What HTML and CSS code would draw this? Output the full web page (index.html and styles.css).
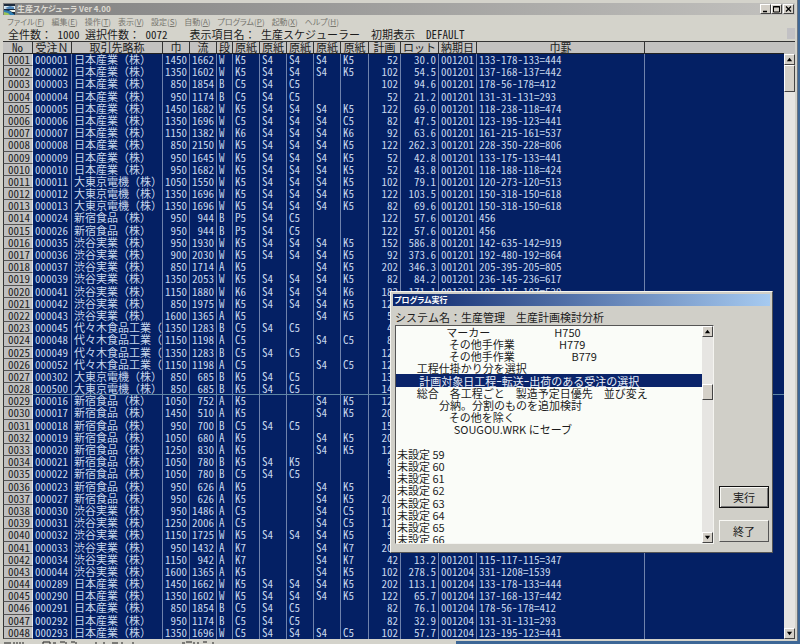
FILE: index.html
```
<!DOCTYPE html>
<html lang="ja">
<head>
<meta charset="utf-8">
<title>生産スケジューラ Ver 4.00</title>
<link rel="stylesheet" href="styles.css">
</head>
<body>
<main class="window">
  <header class="titlebar">
    <svg class="app-icon" viewBox="0 0 11 11" aria-hidden="true">
      <rect width="11" height="11" fill="#1c2a3c"/>
      <path d="M0 2h11v3H0z" fill="#d8e8f0"/>
      <path d="M1 4l5-2 4 1v2H4z" fill="#4f86b8"/>
      <path d="M0 6l6 1 5 4H0z" fill="#2f7fb4"/>
      <path d="M0 8l4 1 2 2H0z" fill="#9cc458"/>
      <path d="M5 6h6v2H8z" fill="#f0f4e8"/>
    </svg>
    <h1>生産スケジューラ Ver 4.00</h1>
    <div class="window-buttons">
      <button type="button" aria-label="最小化"><svg viewBox="0 0 9 8"><path d="M2 6.500h4" stroke="#000" stroke-width="1.500"/></svg></button>
      <button type="button" aria-label="最大化"><svg viewBox="0 0 9 8"><path d="M1.500 1.500h6v5.500h-6zM1 2h7" fill="none" stroke="#000"/></svg></button>
      <button type="button" class="close" aria-label="閉じる"><svg viewBox="0 0 9 8"><path d="M2 1.500l5 5M7 1.500l-5 5" stroke="#000" stroke-width="1.300"/></svg></button>
    </div>
  </header>
  <nav class="menu">
    <button type="button">ファイル(<u>F</u>)</button>
    <button type="button">編集(<u>E</u>)</button>
    <button type="button">操作(<u>T</u>)</button>
    <button type="button">表示(<u>V</u>)</button>
    <button type="button">設定(<u>S</u>)</button>
    <button type="button">自動(<u>A</u>)</button>
    <button type="button">プログラム(<u>P</u>)</button>
    <button type="button">起動(<u>X</u>)</button>
    <button type="button">ヘルプ(<u>H</u>)</button>
  </nav>
  <div class="status">
    <p>全件数： 1000 選択件数： 0072    表示項目名： 生産スケジューラー　初期表示  DEFAULT</p>
    <span class="grip"></span>
  </div>
  <div class="content">
    <div class="grid-area">
      <table class="grid">
        <colgroup>
          <col class="c30"><col class="c39"><col class="c91"><col class="c27"><col class="c27"><col class="c16">
          <col class="c27"><col class="c27"><col class="c27"><col class="c27"><col class="c28">
          <col class="c32"><col class="c38"><col class="c38"><col class="c168"><col>
        </colgroup>
        <thead>
          <tr>
            <th>No</th><th>受注Ｎ</th><th>取引先略称</th><th>巾</th><th>流</th><th>段</th>
            <th>原紙</th><th>原紙</th><th>原紙</th><th>原紙</th><th>原紙</th>
            <th>計画</th><th>ロット</th><th>納期日</th><th>巾罫</th><th class="rest"></th>
          </tr>
        </thead>
        <tbody id="rows"></tbody>
      </table>
    </div>
    <div class="scrollbar">
      <button type="button" aria-label="上へ"><svg viewBox="0 0 8 8"><path d="M1 6l3-4 3 4z"/></svg></button>
      <div class="thumb"></div>
      <button type="button" class="down" aria-label="下へ"><svg viewBox="0 0 8 8"><path d="M1 2l3 4 3-4z"/></svg></button>
    </div>
  </div>
</main>

<footer class="behind">
  <div class="behind-window">
    <svg viewBox="0 0 220 3" width="220" height="3" aria-hidden="true">
      <path d="M4 2h7M14 1v2M17 1v2M20 1v2M23 1v2M43 1h7M43 1v2M50 1v2M53 2h3M60 1h5M66 1v2M71 1h4M76 1v2M96 1v2M104 1v2M112 2h6M122 1v2M133 1v2M182 2h3M186 1h6M194 1v2M198 1v2M203 1h4M213 1v2" stroke="#222" fill="none"/>
    </svg>
  </div>
</footer>

<section class="dialog" role="dialog" aria-labelledby="dialog-title">
  <h2 id="dialog-title">プログラム実行</h2>
  <div class="dialog-body">
    <label for="programs">システム名：生産管理　生産計画検討分析</label>
    <div class="list-frame">
      <select id="programs" size="18"></select>
      <div class="scrollbar">
        <button type="button" aria-label="上へ"><svg viewBox="0 0 8 8"><path d="M1 6l3-4 3 4z"/></svg></button>
        <div class="thumb"></div>
        <button type="button" class="down" aria-label="下へ"><svg viewBox="0 0 8 8"><path d="M1 2l3 4 3-4z"/></svg></button>
      </div>
    </div>
    <div class="actions">
      <button type="button" class="default">実行</button>
      <button type="button">終了</button>
    </div>
  </div>
</section>
<script src="script.js"></script>
</body>
</html>
```
FILE: styles.css
```
* { box-sizing: border-box; }

body {
  margin: 0;
  min-height: 100vh;
  height: 100vh;
  display: flex;
  flex-direction: column;
  background: #3d6796;
  color: #1c1c1c;
  font: 11px/12px "Noto Sans Mono CJK JP", "Noto Sans CJK JP", monospace;
}

h1, h2, p { margin: 0; }

button {
  margin: 0;
  padding: 0;
  font: inherit;
  color: inherit;
}

.window {
  flex: 1;
  min-height: 0;
  display: flex;
  flex-direction: column;
  margin-right: 2px;
  padding: 3px 2px 2px 3px;
  background: #d4d3cb;
  border-right: 1px solid #6b7480;
}

.titlebar {
  height: 12px;
  display: flex;
  align-items: center;
  padding-right: 1px;
  background: linear-gradient(to right, #808080, #c2c1be);
  margin-bottom: 1px;
}

.app-icon { width: 11px; height: 11px; margin: 0 2px 0 1px; }

.titlebar h1 {
  flex: 1;
  font: bold 8px/12px "Noto Sans CJK JP", sans-serif;
  font-feature-settings: "palt";
  color: #dcdad2;
}

.window-buttons { display: flex; }

.window-buttons button,
.scrollbar button,
.thumb {
  background: #d4d0c8;
  border: 1px solid;
  border-color: #fff #444 #444 #fff;
}

.window-buttons button { width: 11px; height: 10px; display: flex; }
.window-buttons .close { margin-left: 1px; }
.window-buttons svg { width: 9px; height: 8px; }

.menu {
  height: 12px;
  display: flex;
  gap: 7px;
  padding-left: 4px;
}

.menu button {
  border: 0;
  background: none;
  font: 8px/12px "Noto Sans CJK JP", sans-serif;
  font-feature-settings: "palt";
  color: #77766f;
}

.status {
  height: 13px;
  display: flex;
  justify-content: space-between;
  padding-left: 5px;
  white-space: pre;
}

.status p { line-height: 13px; }
.grip { width: 8px; height: 11px; background: #c2c1c4; }

.content {
  flex: 1;
  min-height: 0;
  display: flex;
  background: #c3c2c0;
  border-top: 1px solid #333;
}

.grid-area { flex: 1; min-width: 0; }

.grid {
  width: 100%;
  height: 100%;
  table-layout: fixed;
  border-collapse: separate;
  border-spacing: 0;
  background: #042064;
  color: #c6d6ec;
}

.c16 { width: 16px; }
.c27 { width: 27px; }
.c28 { width: 28px; }
.c30 { width: 30px; }
.c32 { width: 32px; }
.c38 { width: 38px; }
.c39 { width: 39px; }
.c91 { width: 91px; }
.c168 { width: 168px; }

.grid th, .grid td {
  padding: 0 2px;
  line-height: 11px;
  vertical-align: top;
  white-space: nowrap;
  text-align: left;
  border-right: 1px solid #6f82ac;
}

.grid thead th {
  height: 12px;
  padding: 0;
  font-weight: normal;
  text-align: center;
  color: #1c1c1c;
  background: #c3c2c0;
  border-right-color: #333;
  border-bottom: 1px solid #222;
}

.grid thead .rest, .grid td:last-child { border-right: 0; }

.grid tbody th {
  font-weight: normal;
  text-align: right;
  color: #222;
  background: #c0c0c0;
  border-left: 1px solid #333;
  border-bottom: 1px solid #555;
  border-right-color: #e8e8e8;
}

.grid .num { text-align: right; }
.grid .section-end td { border-bottom: 1px solid #5f86a4; }

.scrollbar {
  width: 11px;
  display: flex;
  flex-direction: column;
  background: #e6e5e2;
}

.content .scrollbar { margin-top: 12px; }
.scrollbar button { height: 11px; display: flex; justify-content: center; align-items: center; }
.scrollbar svg { width: 7px; height: 7px; }
.scrollbar .thumb { height: 27px; }
.scrollbar .down { margin-top: auto; }

.behind { height: 3px; }
.behind-window { width: 57%; height: 3px; background: #d4d3cb; overflow: hidden; }
.behind-window svg { display: block; }

.dialog {
  position: absolute;
  left: 390px;
  top: 291px;
  width: 383px;
  padding: 2px;
  background: #d0cfc8;
  border: 1px solid;
  border-color: #f4f4f0 #555 #555 #f4f4f0;
}

.dialog h2 {
  padding-left: 1px;
  font: bold 8px/12px "Noto Sans CJK JP", sans-serif;
  font-feature-settings: "palt";
  color: #fff;
  background: linear-gradient(to right, #0a246a, #a6caf0);
}

.dialog-body {
  display: grid;
  grid-template-columns: 1fr 50px;
  column-gap: 5px;
  padding: 5px 1px 6px 2px;
}

.dialog-body label { grid-column: 1 / -1; height: 14px; white-space: pre; }

.list-frame {
  height: 219px;
  display: flex;
  border: 1px solid;
  border-color: #555 #f4f4f0 #f4f4f0 #555;
  background: #fafcf8;
}

.list-frame select {
  flex: 1;
  min-width: 0;
  height: 100%;
  margin: 0;
  padding: 0;
  border: 0;
  outline: 0;
  overflow: hidden;
  scrollbar-width: none;
  background: #fafcf8;
  font: 11px/12px "Noto Sans CJK JP", sans-serif;
}

.list-frame option {
  display: flex;
  align-items: center;
  min-height: 12px;
  height: 12px;
  padding: 0 1px;
  line-height: 12px;
  color: #1c1c1c;
}

.list-frame option:nth-child(5n) { height: 13px; }

.list-frame option:checked {
  color: #e8eef8;
  background: linear-gradient(#0a246a, #0a246a);
}

.list-frame .thumb { height: 16px; margin-top: 47px; }

.actions {
  display: flex;
  flex-direction: column;
  justify-content: flex-end;
  gap: 12px;
  padding-bottom: 2px;
}

.actions button {
  height: 22px;
  background: #d0cfc8;
  border: 1px solid;
  border-color: #f8f8f4 #555 #555 #f8f8f4;
}

.actions .default {
  border-color: #111;
  box-shadow: inset 1px 1px #f8f8f4, inset -1px -1px #777;
}
```
FILE: script.js
```
// order, customer, width, flow, flute, papers 1-5, plan, lot, due date, score
const N = '日本産業（株）', D = '大東京電機（株）', S = '新宿食品（株）';
const B = '渋谷実業（株）', Y = '代々木食品工業（';
const records = [
  ['000001', N, 1450, 1662, 'W', 'K5 S4 S4 S4 K5', 52, '30.0', '001201', '133-178-133=444'],
  ['000002', N, 1350, 1602, 'W', 'K5 S4 S4 S4 K5', 102, '54.5', '001201', '137-168-137=442'],
  ['000003', N, 850, 1854, 'B', 'C5 S4 C5', 102, '94.6', '001201', '178-56-178=412'],
  ['000004', N, 950, 1174, 'B', 'C5 S4 C5', 52, '21.2', '001201', '131-31-131=293'],
  ['000005', N, 1450, 1682, 'W', 'K5 S4 S4 S4 K5', 122, '69.0', '001201', '118-238-118=474'],
  ['000006', N, 1350, 1696, 'W', 'C5 S4 S4 S4 C5', 82, '47.5', '001201', '123-195-123=441'],
  ['000007', N, 1150, 1382, 'W', 'K6 S4 S4 S4 K6', 92, '63.6', '001201', '161-215-161=537'],
  ['000008', N, 850, 2150, 'W', 'K5 S4 S4 S4 K5', 122, '262.3', '001201', '228-350-228=806'],
  ['000009', N, 950, 1645, 'W', 'K5 S4 S4 S4 K5', 52, '42.8', '001201', '133-175-133=441'],
  ['000010', N, 950, 1682, 'W', 'K5 S4 S4 S4 K5', 52, '43.8', '001201', '118-188-118=424'],
  ['000011', D, 1050, 1550, 'W', 'K5 S4 S4 S4 K5', 102, '79.1', '001201', '120-273-120=513'],
  ['000012', D, 1350, 1696, 'W', 'K5 S4 S4 S4 K5', 122, '103.5', '001201', '150-318-150=618'],
  ['000013', D, 1350, 1696, 'W', 'K5 S4 S4 S4 K5', 82, '69.6', '001201', '150-318-150=618'],
  ['000024', S, 950, 944, 'B', 'P5 S4 C5', 122, '57.6', '001201', '456'],
  ['000026', S, 950, 944, 'B', 'P5 S4 C5', 122, '57.6', '001201', '456'],
  ['000035', B, 950, 1930, 'W', 'K5 S4 S4 S4 K5', 152, '586.8', '001201', '142-635-142=919'],
  ['000036', B, 900, 2030, 'W', 'K5 S4 S4 S4 K5', 92, '373.6', '001201', '192-480-192=864'],
  ['000037', B, 850, 1714, 'A', 'K5 - - S4 K5', 202, '346.3', '001201', '205-395-205=805'],
  ['000039', B, 1350, 2053, 'W', 'K5 S4 S4 S4 K5', 82, '84.2', '001201', '236-145-236=617'],
  ['000041', B, 1150, 1880, 'W', 'K6 S4 S4 S4 K6', 182, '171.1', '001201', '107-315-107=529'],
  ['000042', B, 850, 1975, 'W', 'K5 S4 S4 S4 K5', 122],
  ['000043', B, 1600, 1365, 'A', 'K5 - - S4 K5', 52],
  ['000045', Y, 1350, 1283, 'B', 'C5 S4 C5', 42],
  ['000048', Y, 1150, 1198, 'A', 'C5 - - S4 C5', 82],
  ['000049', Y, 1350, 1283, 'B', 'C5 S4 C5', 122],
  ['000052', Y, 1150, 1198, 'A', 'C5 - - S4 C5', 122],
  ['000302', D, 850, 685, 'B', 'K5 S4 C5', 132],
  ['000500', D, 850, 685, 'B', 'K5 S4 C5', 142],
  ['000016', S, 1050, 752, 'A', 'K5 - - S4 K5', 122],
  ['000017', S, 1450, 510, 'A', 'K5 - - S4 K5', 202],
  ['000018', S, 950, 700, 'B', 'C5 S4 C5', 152],
  ['000019', S, 1050, 680, 'A', 'K5 - - S4 K5', 202],
  ['000020', S, 1250, 830, 'A', 'K5 - - S4 K5', 122],
  ['000021', S, 1050, 780, 'B', 'K5 S4 K5', 82],
  ['000022', S, 1050, 780, 'B', 'C5 S4 C5', 52],
  ['000023', S, 950, 626, 'A', 'K5 - - S4 K5', ''],
  ['000027', S, 950, 626, 'A', 'K5 - - S4 K5', 202],
  ['000030', B, 950, 1486, 'A', 'C5 - - S4 C5', 102],
  ['000031', B, 1250, 2006, 'A', 'C5 - - S4 C5', 122],
  ['000032', B, 1150, 1725, 'W', 'K5 S4 S4 S4 K5', 92],
  ['000033', B, 950, 1432, 'A', 'K7 - - S4 K7', 202],
  ['000034', B, 1150, 942, 'A', 'K7 - - S4 K7', 42, '13.2', '001201', '115-117-115=347'],
  ['000044', B, 1600, 1365, 'A', 'K5 - - S4 K5', 102, '278.5', '001204', '331-1208=1539'],
  ['000289', N, 1450, 1662, 'W', 'K5 S4 S4 S4 K5', 202, '113.1', '001204', '133-178-133=444'],
  ['000290', N, 1350, 1602, 'W', 'K5 S4 S4 S4 K5', 122, '65.7', '001204', '137-168-137=442'],
  ['000291', N, 850, 1854, 'B', 'C5 S4 C5', 82, '76.1', '001204', '178-56-178=412'],
  ['000292', N, 950, 1174, 'B', 'C5 S4 C5', 82, '32.9', '001204', '131-31-131=293'],
  ['000293', N, 1350, 1696, 'W', 'C5 S4 S4 S4 C5', 102, '57.7', '001204', '123-195-123=441']
];

const body = document.getElementById('rows');
records.forEach((r, i) => {
  const papers = r[5].split(' ').map(p => (p === '-' ? '' : p));
  while (papers.length < 5) papers.push('');
  const cell = (v, num) => `<td${num ? ' class="num"' : ''}>${v === undefined ? '' : v}</td>`;
  const tr = document.createElement('tr');
  if (i === 27) tr.className = 'section-end';
  tr.innerHTML = `<th scope="row">${String(i + 1).padStart(4, '0')}</th>` +
    cell(r[0]) + cell(r[1]) + cell(r[2], true) + cell(r[3], true) + cell(r[4]) +
    papers.map(p => cell(p)).join('') +
    cell(r[6], true) + cell(r[7], true) + cell(r[8]) + cell(r[9]) + cell('');
  body.append(tr);
});

// Each entry: leading spaces, text, spaces before the code, code
const programs = [
  [20, 'マーカー', 26, 'H750'],
  [21, 'その他手作業', 18, 'H779'],
  [21, 'その他手作業', 23, 'B779'],
  [8, '工程仕掛かり分を選択'],
  [9, '計画対象日工程ｰ転送ｰ出荷のある受注の選択'],
  [8, '総合　各工程ごと　製造予定日優先　並び変え'],
  [17, '分納。分割のものを追加検討'],
  [21, 'その他を除く'],
  [23, 'SOUGOU.WRK にセーブ'],
  [0, '']
];
for (let n = 59; n <= 66; n++) programs.push([0, '未設定 ' + n]);

const list = document.getElementById('programs');
programs.forEach(([indent, text, gap = 0, code = '']) => {
  const option = new Option('\u00a0'.repeat(indent) + text + '\u00a0'.repeat(gap) + code);
  list.add(option);
});
list.selectedIndex = 4;
```
